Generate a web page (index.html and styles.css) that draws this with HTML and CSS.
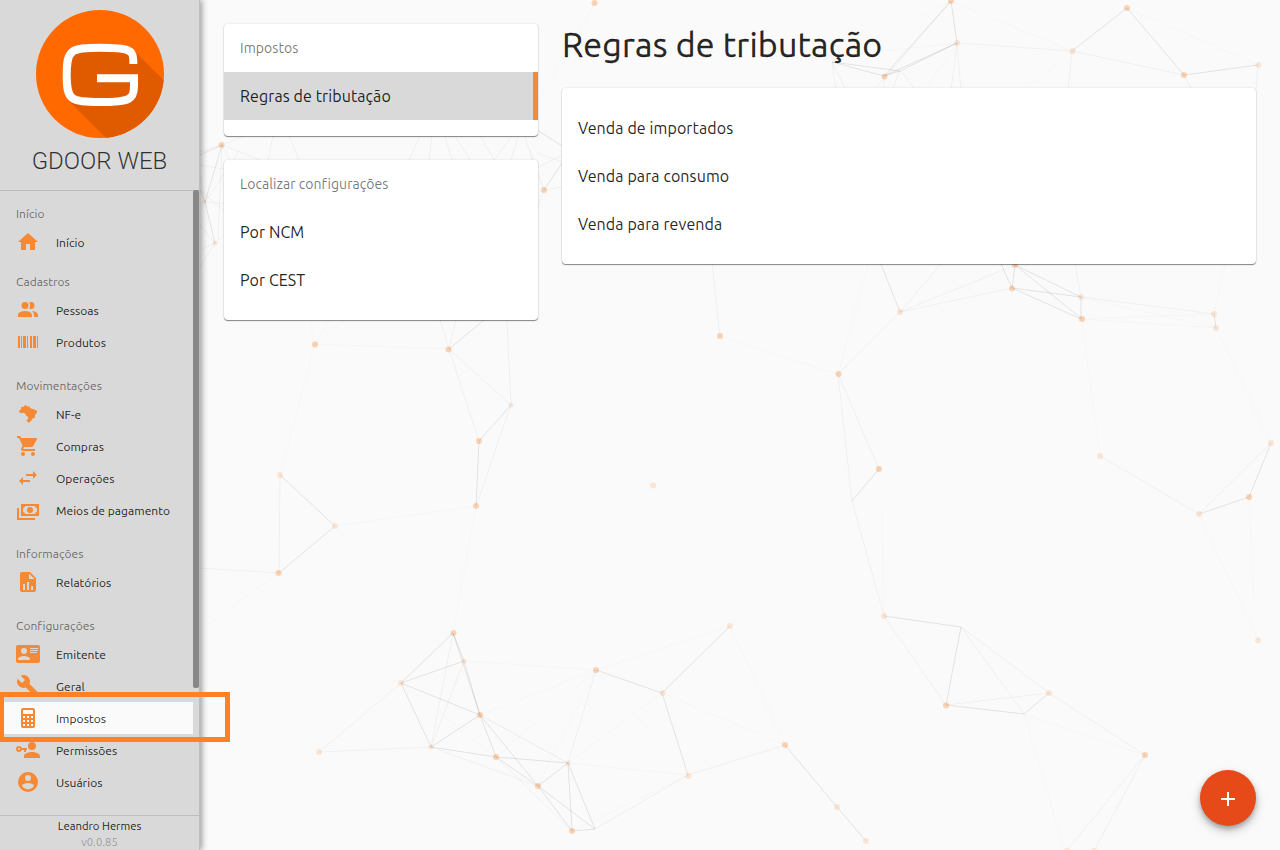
FILE: index.html
```html
<!DOCTYPE html>
<html lang="pt-BR">
<head>
<meta charset="utf-8">
<title>GDOOR WEB</title>
<link rel="stylesheet" href="styles.css">
</head>
<body>
<svg class="network" viewBox="0 0 1280 850" aria-hidden="true">
  <g class="links-faint">
    <path d="M951 1L1072 51M1127 8L1258 65M900 28L951 1M957 43L800 60M1072 51L1020 95M595 3L535 105M344 320L315 344L449 349M315 344L280 475M335 526L476 506L453 633M200 630L279 573M596 670L730 626L785 745L662 693M596 670L688 775L572 831M868 264L838 374L720 336M1082 319L1085 345L1100 456M1216 328L1271 443M1199 514L1258 640M1249 497L1254 600M1081 297L1216 328M1082 319L1214 314M1082 319L1216 328M1225 264L1214 314M1024 714L1145 755M1024 714L1063 845M884 616L882 510M464 661L596 670L480 715M596 670L496 757M596 670L538 786M401 683L496 757M480 715L568 763L662 693M568 763L688 775M310 320L314 344M330 320L315 344M957 43L926 88"/>
  </g>
  <g class="links-soft">
    <path d="M957 43L1072 51L1184 75L1192 90M1072 51L1068 90M1258 65L1256 90M957 43L951 90M957 43L961 90M951 1L840 130M1075 264L1081 297L1214 314M900 312L1012 288M900 312L1015 265M941 264L900 312L838 374L879 469M838 374L852 501L884 616L946 705M1100 456L1199 514L1271 443M961 627L1049 693L1145 755L1068 849M1145 755L1095 849M946 705L1049 693M961 627L1024 714M449 349L511 405L476 506M449 349L479 441M511 405L507 320M440 320L449 349L456 320M280 475L279 573L200 568M319 752L401 683M319 752L431 747L538 786M453 633L431 747L464 661M480 715L568 763M496 757L572 831M595 829L688 775L785 745M596 670L568 763M712 264L720 336M832 62L836 90M832 62L846 90M884 76V90M900 71L892 90M901 71L914 88"/>
    <path d="M222 145L200 152M222 145L250 134M222 145L260 160M222 145L232 165M222 145L218 240M205 202L240 150M205 202L200 175M205 202L270 207M215 243L200 225M215 243L200 250M215 243L200 267M215 243L240 220M200 165L240 172M200 190L240 225M273 136L268 160M289 136L299 160M420 136L409 160M445 136L452 160M432 136L429 160M455 136L470 160M480 136L494 160M512 136L494 160M518 136L511 160M525 136L532 160M537 153L562 162M537 168L562 155M544 190L530 150M544 190L535 215M544 190L562 187"/>
  </g>
  <g class="links-strong">
    <path d="M951 1L957 43L900 71L884 76L832 62L900 71M951 1L884 76M957 43L884 76M1072 51L1127 8L1184 75L1258 65M881 264L900 312M1001 264L1012 288L1015 265L1081 297V319L1012 288L1081 297M1015 265L1082 319M1214 314L1216 328M1271 443L1249 497L1199 514M884 616L961 627L946 705L1024 714L1049 693M879 469L852 501M449 349L484 320M511 405L479 441L476 506M280 475L335 526L279 573M401 683L453 633L464 661L480 715L496 757L538 786L572 831L595 829L568 763L538 786L595 829M453 633L480 715L538 786M401 683L464 661M401 683L431 747L496 757L568 763L572 831M401 683L480 715L431 747M596 670L662 693L730 626M662 693L688 775M785 745L837 807L866 841M222 145L205 202L215 243M205 202L200 190M222 145L200 155M537 130L562 146M544 190L562 163"/>
  </g>
  <g class="nodes-soft">
    <circle cx="957" cy="43" r="3"/><circle cx="1072.500" cy="51" r="3"/><circle cx="1258.500" cy="65" r="3"/><circle cx="900" cy="312" r="3"/><circle cx="1081" cy="297" r="3"/><circle cx="1214" cy="314" r="3"/><circle cx="1216" cy="328" r="3"/><circle cx="1271" cy="443" r="3"/><circle cx="1199" cy="514" r="3"/><circle cx="1100" cy="456" r="3"/><circle cx="1258" cy="640.500" r="3"/><circle cx="1049" cy="693" r="3"/><circle cx="884" cy="616" r="3"/><circle cx="730" cy="626" r="3"/><circle cx="662.500" cy="693" r="3"/><circle cx="688.500" cy="776" r="3"/><circle cx="837" cy="807" r="3"/><circle cx="866" cy="841" r="3"/><circle cx="319" cy="752" r="3"/><circle cx="401" cy="683" r="3"/><circle cx="464" cy="661" r="2.500"/><circle cx="431" cy="747" r="2.500"/><circle cx="568" cy="763" r="2.500"/><circle cx="280" cy="475" r="3"/><circle cx="335" cy="526" r="3"/><circle cx="511" cy="405" r="2.500"/><circle cx="653" cy="485.500" r="3"/><circle cx="1067" cy="851" r="3"/><circle cx="1094" cy="851" r="3"/><circle cx="204" cy="202" r="2"/><circle cx="215" cy="243" r="2.500"/>
  </g>
  <g class="nodes-strong">
    <circle cx="951" cy="1" r="3"/><circle cx="1127" cy="8" r="3"/><circle cx="1184" cy="75" r="3"/><circle cx="884.500" cy="76.500" r="3"/><circle cx="594.500" cy="3" r="3"/><circle cx="1015" cy="265" r="3"/><circle cx="1012" cy="288.500" r="3"/><circle cx="1082" cy="319" r="3"/><circle cx="720" cy="336" r="3"/><circle cx="838.500" cy="374" r="3"/><circle cx="879" cy="469" r="3"/><circle cx="1249" cy="497" r="3"/><circle cx="946" cy="705.500" r="3"/><circle cx="1145" cy="755" r="3"/><circle cx="785" cy="745" r="3"/><circle cx="596" cy="670" r="3"/><circle cx="453.500" cy="633" r="3"/><circle cx="480" cy="715" r="3"/><circle cx="496" cy="757" r="3"/><circle cx="538" cy="786" r="3"/><circle cx="572" cy="831" r="3"/><circle cx="315" cy="344.500" r="3"/><circle cx="448.500" cy="349.500" r="3"/><circle cx="479" cy="441" r="3"/><circle cx="476" cy="506" r="3"/><circle cx="278.500" cy="573" r="3"/><circle cx="221.500" cy="145" r="3"/><circle cx="544" cy="190" r="3"/>
  </g>
</svg>

<div class="app">
  <aside class="sidebar">
    <header class="brand">
      <svg class="logo" viewBox="36 10 128 128" aria-label="GDOOR">
        <defs><clipPath id="disc"><circle cx="100" cy="74" r="64"/></clipPath></defs>
        <circle cx="100" cy="74" r="64" fill="#ff6900"/>
        <path clip-path="url(#disc)" fill="#e05a00" d="M70 50H133L170 86V150H118L68 100Z"/>
        <path fill="none" stroke="#fff" stroke-width="8" d="M133.300 64V60C133.300 50 129 47.800 100 47.800C70 47.800 66.700 50 66.700 75C66.700 100 70 102 100 102C130 102 134 99.500 134 86V78.200H97"/>
      </svg>
      <div class="brand-name">GDOOR WEB</div>
    </header>
    <nav class="menu">
      <section class="group group-first">
        <h2 class="group-title">Início</h2>
        <a class="item"><svg class="icon" viewBox="0 0 24 24"><path d="M10 20V14H14V20H19V12H22L12 3L2 12H5V20H10Z"/></svg><span>Início</span></a>
      </section>
      <section class="group">
        <h2 class="group-title">Cadastros</h2>
        <a class="item"><svg class="icon" viewBox="0 0 24 24"><path d="M16 17V19H2V17S2 13 9 13 16 17 16 17M12.500 7.500A3.500 3.500 0 1 0 9 11A3.500 3.500 0 0 0 12.500 7.500M15.940 13A5.320 5.320 0 0 1 18 17V19H22V17S22 13.370 15.940 13M15 4A3.390 3.390 0 0 0 13.070 4.590A5 5 0 0 1 13.070 10.410A3.390 3.390 0 0 0 15 11A3.500 3.500 0 0 0 15 4Z"/></svg><span>Pessoas</span></a>
        <a class="item"><svg class="icon" viewBox="0 0 24 24"><path d="M2 6H4V18H2V6M5 6H6V18H5V6M7 6H10V18H7V6M11 6H12V18H11V6M14 6H16V18H14V6M17 6H20V18H17V6M21 6H22V18H21V6Z"/></svg><span>Produtos</span></a>
      </section>
      <section class="group">
        <h2 class="group-title">Movimentações</h2>
        <a class="item"><svg class="icon" viewBox="0 0 24 24"><path d="M3 8.500L5 7.500L5.300 4.800L7.500 5L8.300 3.500L10.500 3.300L11 4.800L13.500 4.200L14.300 6.300L17 7L21 8.700L21 10.500L19.300 12.500L18.700 15.800L16.300 16.800L15.300 18.700L12.700 20.700L10.500 18.700L12.300 16.700L11.700 14.500L10 13.700L9.500 11.800L7.300 10.800L5 11.300L3.200 10Z"/></svg><span>NF-e</span></a>
        <a class="item"><svg class="icon" viewBox="0 0 24 24"><path d="M17 18A2 2 0 0 1 19 20A2 2 0 0 1 17 22C15.890 22 15 21.100 15 20C15 18.890 15.890 18 17 18M1 2H4.270L5.210 4H20A1 1 0 0 1 21 5C21 5.170 20.950 5.340 20.880 5.500L17.300 11.970C16.960 12.580 16.300 13 15.550 13H8.100L7.200 14.630L7.170 14.750A.25 .25 0 0 0 7.420 15H19V17H7C5.890 17 5 16.100 5 15C5 14.650 5.090 14.320 5.240 14.040L6.600 11.590L3 4H1V2M7 18A2 2 0 0 1 9 20A2 2 0 0 1 7 22C5.890 22 5 21.100 5 20C5 18.890 5.890 18 7 18Z"/></svg><span>Compras</span></a>
        <a class="item"><svg class="icon" viewBox="0 0 24 24"><path d="M21 9L17 5V8H10V10H17V13M7 11L3 15L7 19V16H14V14H7V11Z"/></svg><span>Operações</span></a>
        <a class="item"><svg class="icon" viewBox="0 0 24 24"><path d="M5 6H23V18H5V6M14 9A3 3 0 0 1 17 12A3 3 0 0 1 14 15A3 3 0 0 1 11 12A3 3 0 0 1 14 9M9 8A2 2 0 0 1 7 10V14A2 2 0 0 1 9 16H19A2 2 0 0 1 21 14V10A2 2 0 0 1 19 8H9M1 10H3V20H19V22H1V10Z"/></svg><span>Meios de pagamento</span></a>
      </section>
      <section class="group">
        <h2 class="group-title">Informações</h2>
        <a class="item"><svg class="icon" viewBox="0 0 24 24"><path d="M13 9H18.500L13 3.500V9M6 2H14L20 8V20A2 2 0 0 1 18 22H6C4.890 22 4 21.100 4 20V4C4 2.890 4.890 2 6 2M7 20H9V14H7V20M11 20H13V12H11V20M15 20H17V16H15V20Z"/></svg><span>Relatórios</span></a>
      </section>
      <section class="group">
        <h2 class="group-title">Configurações</h2>
        <a class="item"><svg class="icon" viewBox="0 0 24 24"><path d="M2 3H22C23.050 3 24 3.950 24 5V19C24 20.050 23.050 21 22 21H2C.95 21 0 20.050 0 19V5C0 3.950 .95 3 2 3M14 6V7H22V6H14M14 8V9H22V8H14M14 10V11H21V10H14M8 13.910C6 13.910 2 15 2 17V18H14V17C14 15 10 13.910 8 13.910M8 6A3 3 0 0 0 5 9A3 3 0 0 0 8 12A3 3 0 0 0 11 9A3 3 0 0 0 8 6Z"/></svg><span>Emitente</span></a>
        <a class="item"><svg class="icon" viewBox="0 0 24 24"><path d="M22.700 19L13.600 9.900C14.500 7.600 14 4.900 12.100 3C10.100 1 7.100 .6 4.700 1.700L9 6L6 9L1.600 4.700C.4 7.100 .9 10.100 2.900 12.100C4.800 14 7.500 14.500 9.800 13.600L18.900 22.700C19.300 23.100 19.900 23.100 20.300 22.700L22.600 20.400C23.100 20 23.100 19.300 22.700 19Z"/></svg><span>Geral</span></a>
        <a class="item item-active"><svg class="icon" viewBox="0 0 24 24"><path d="M7 2H17A2 2 0 0 1 19 4V20A2 2 0 0 1 17 22H7A2 2 0 0 1 5 20V4A2 2 0 0 1 7 2M7 4V8H17V4H7M7 10V12H9V10H7M11 10V12H13V10H11M15 10V12H17V10H15M7 14V16H9V14H7M11 14V16H13V14H11M15 14V16H17V14H15M7 18V20H9V18H7M11 18V20H13V18H11M15 18V20H17V18H15Z"/></svg><span>Impostos</span></a>
        <a class="item"><svg class="icon" viewBox="0 0 24 24"><path d="M11 10V12H10V14H8V12H5.830C5.420 13.170 4.310 14 3 14A3 3 0 0 1 0 11A3 3 0 0 1 3 8C4.310 8 5.420 8.830 5.830 10H11M3 10A1 1 0 0 0 2 11A1 1 0 0 0 3 12A1 1 0 0 0 4 11A1 1 0 0 0 3 10M16 14C18.670 14 24 15.340 24 18V20H8V18C8 15.340 13.330 14 16 14M16 12A4 4 0 0 1 12 8A4 4 0 0 1 16 4A4 4 0 0 1 20 8A4 4 0 0 1 16 12Z"/></svg><span>Permissões</span></a>
        <a class="item"><svg class="icon" viewBox="0 0 24 24"><path d="M12 19.200C9.500 19.200 7.290 17.920 6 16C6.030 14 10 12.900 12 12.900C14 12.900 17.970 14 18 16C16.710 17.920 14.500 19.200 12 19.200M12 5A3 3 0 0 1 15 8A3 3 0 0 1 12 11A3 3 0 0 1 9 8A3 3 0 0 1 12 5M12 2A10 10 0 0 0 2 12A10 10 0 0 0 12 22A10 10 0 0 0 22 12C22 6.470 17.500 2 12 2Z"/></svg><span>Usuários</span></a>
      </section>
      <div class="scroll-thumb"></div>
    </nav>
    <footer class="account">
      <div class="user">Leandro Hermes</div>
      <div class="version">v0.0.85</div>
    </footer>
  </aside>

  <main class="content">
    <div class="side-column">
      <section class="card">
        <h3 class="card-title">Impostos</h3>
        <a class="row row-selected">Regras de tributação</a>
      </section>
      <section class="card">
        <h3 class="card-title">Localizar configurações</h3>
        <a class="row">Por NCM</a>
        <a class="row">Por CEST</a>
      </section>
    </div>
    <div class="main-column">
      <h1 class="page-title">Regras de tributação</h1>
      <section class="card card-list">
        <a class="row">Venda de importados</a>
        <a class="row">Venda para consumo</a>
        <a class="row">Venda para revenda</a>
      </section>
    </div>
  </main>
</div>

<div class="callout"></div>
<button class="fab" aria-label="Adicionar"><svg viewBox="0 0 24 24"><path d="M5 13H19M12 6V20" fill="none" stroke="#fff" stroke-width="2"/></svg></button>
</body>
</html>
```
FILE: styles.css
```css
* { box-sizing: border-box; }
body {
  margin: 0;
  height: 850px;
  overflow: hidden;
  position: relative;
  background: #fafafa;
  color: rgba(0, 0, 0, .87);
  font-family: Ubuntu, "Noto Sans", sans-serif;
}
h1, h2, h3 { margin: 0; font-weight: 400; }

.network { position: absolute; left: 0; top: 0; width: 1280px; height: 850px; }
.network g path { fill: none; stroke-width: 1; }
.links-faint { stroke: rgba(0, 0, 0, .018); }
.links-soft { stroke: rgba(0, 0, 0, .042); }
.links-strong { stroke: rgba(0, 0, 0, .095); }
.nodes-soft { fill: rgba(247, 137, 52, .18); }
.nodes-strong { fill: rgba(247, 137, 52, .35); }

.app { position: relative; display: flex; height: 850px; }

.sidebar {
  display: flex;
  flex-direction: column;
  flex: none;
  width: 200px;
  background: #d9d9d9;
  border-right: 1px solid #bdbdbd;
  box-shadow: 2px 0 6px rgba(0, 0, 0, .38);
}
.brand { height: 191px; padding-top: 10px; border-bottom: 1px solid #bdbdbd; text-align: center; }
.logo { display: block; width: 128px; height: 128px; margin: 0 auto; }
.brand-name { margin-top: 7px; font: 300 24px/32px Roboto, sans-serif; color: rgba(0, 0, 0, .78); }

.menu { position: relative; flex: 1; padding-top: 11px; font-size: 12px; letter-spacing: .05px; }
.group { padding-bottom: 16px; }
.group-first { padding-bottom: 12px; }
.group-title { padding: 0 16px; font-size: 12px; line-height: 24px; color: rgba(0, 0, 0, .54); }
.item { display: flex; align-items: center; gap: 16px; width: 193px; height: 32px; padding-left: 16px; }
.item-active { background: #fafafa; }
.icon { width: 24px; height: 24px; fill: #f78934; fill-rule: evenodd; }
.scroll-thumb { position: absolute; top: -1px; right: 0; width: 6px; height: 498px; border-radius: 2px; background: #888; }

.account { height: 35px; border-top: 1px solid #bdbdbd; text-align: center; font-size: 11.3px; }
.user { line-height: 20px; }
.version { line-height: 12px; color: rgba(0, 0, 0, .32); }

.content {
  flex: 1;
  display: grid;
  grid-template-columns: 314px 1fr;
  gap: 24px;
  padding: 24px;
  align-items: start;
}
.side-column { display: grid; gap: 24px; }
.card {
  padding-bottom: 16px;
  border-radius: 4px;
  background: #fff;
  box-shadow: 0 1px 1px rgba(0, 0, 0, .45), 0 0 2px rgba(0, 0, 0, .16);
}
.card-title { padding: 0 16px; font-size: 14px; line-height: 48px; letter-spacing: .06px; color: rgba(0, 0, 0, .54); }
.row { display: block; padding: 0 16px; font-size: 16px; line-height: 48px; letter-spacing: .1px; }
.row-selected { background: #d9d9d9; border-right: 5px solid #f78934; }
.card-list { padding-top: 16px; }
.page-title { height: 64px; font-size: 34px; line-height: 41px; letter-spacing: .2px; -webkit-text-stroke: .3px; }

.callout { position: absolute; left: -1px; top: 692px; width: 231px; height: 50px; border: 5px solid #ff8126; }
.fab {
  position: absolute;
  right: 24px;
  bottom: 24px;
  display: grid;
  place-items: center;
  width: 56px;
  height: 56px;
  padding: 0;
  border: 0;
  border-radius: 50%;
  background: #e64a19;
  box-shadow: 0 3px 5px rgba(0, 0, 0, .25), 0 5px 12px rgba(0, 0, 0, .18);
}
.fab svg { width: 24px; height: 24px; }
```
